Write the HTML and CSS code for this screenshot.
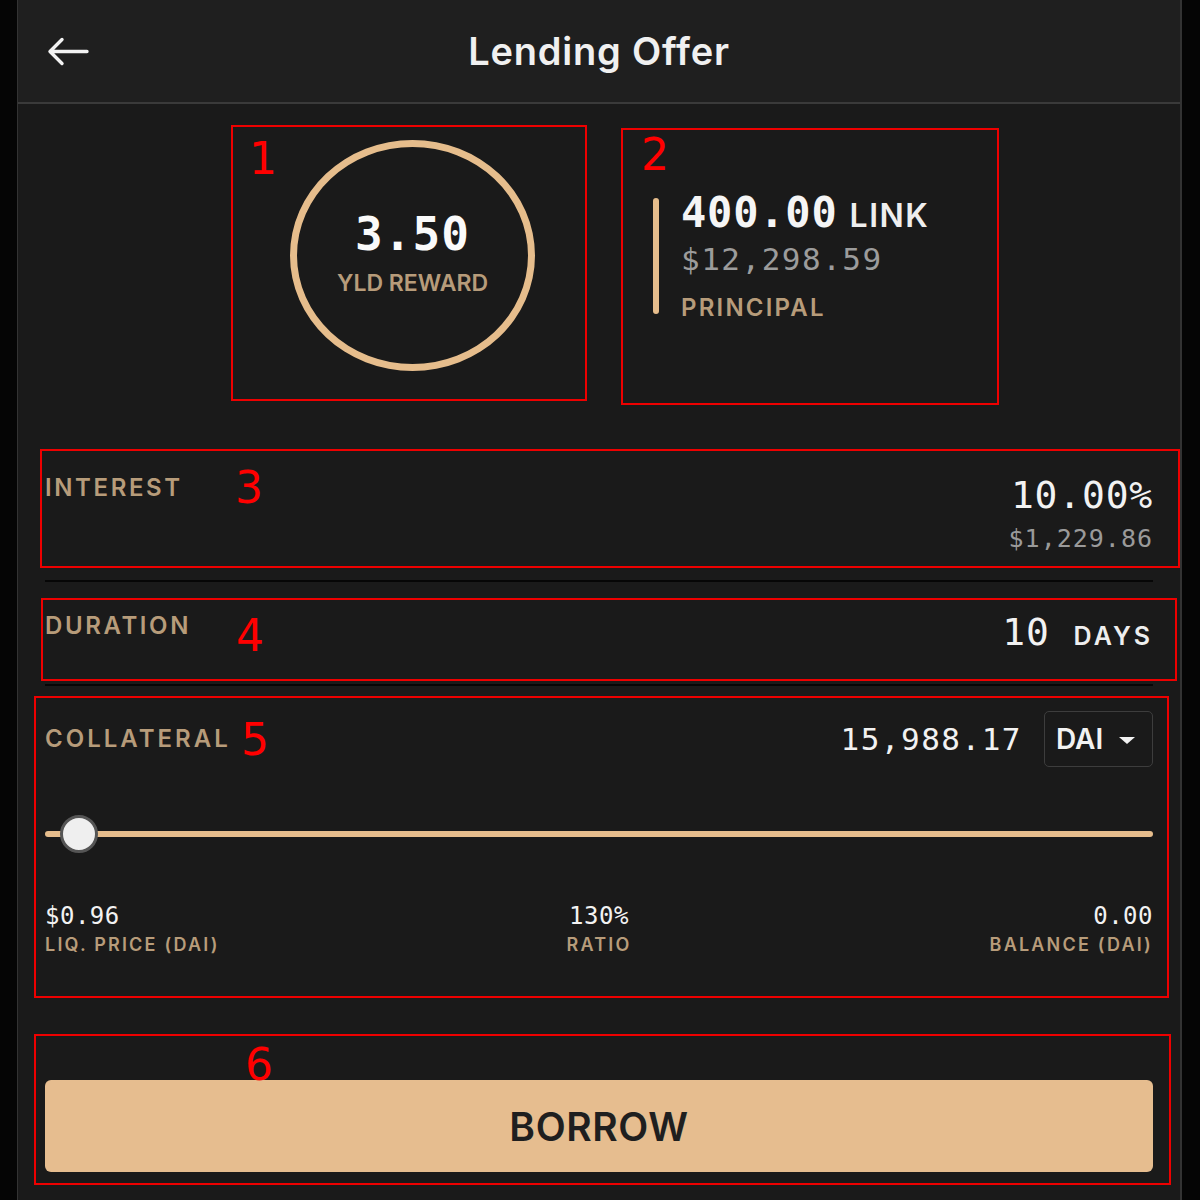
FILE: index.html
```html
<!DOCTYPE html>
<html>
<head>
<meta charset="utf-8">
<link rel="stylesheet" href="styles.css">
</head>
<body>
<div class="app">
  <header class="header">
    <div class="back">
      <svg width="44" height="30" viewBox="0 0 44 30"><path d="M41 14.5 H4 M16 2.5 L4 14.5 L16 26.5" fill="none" stroke="#f2f2f2" stroke-width="3.4" stroke-linecap="round" stroke-linejoin="round"/></svg>
    </div>
    <h1 class="title">Lending Offer</h1>
    <div></div>
  </header>
  <main class="content">
    <section class="top">
      <div class="ring">
        <div class="ring-value">3.50</div>
        <div class="ring-label">YLD REWARD</div>
      </div>
      <div class="principal">
        <div class="bar"></div>
        <div class="principal-text">
          <div class="p-amount"><span class="mono">400.00</span><span class="unit">LINK</span></div>
          <div class="p-usd">$12,298.59</div>
          <div class="label p-label">PRINCIPAL</div>
        </div>
      </div>
    </section>

    <section class="row interest">
      <div class="label">INTEREST</div>
      <div class="values">
        <div class="big">10.00%</div>
        <div class="sub">$1,229.86</div>
      </div>
    </section>
    <div class="divider"></div>

    <section class="row duration">
      <div class="label">DURATION</div>
      <div class="values inline">
        <span class="big">10</span><span class="unit days">DAYS</span>
      </div>
    </section>
    <div class="divider"></div>

    <section class="collateral">
      <div class="row coll-head">
        <div class="label">COLLATERAL</div>
        <div class="coll-right">
          <span class="coll-amount">15,988.17</span>
          <div class="select">DAI<span class="caret"></span></div>
        </div>
      </div>
      <div class="slider">
        <div class="track"></div>
        <div class="thumb"></div>
      </div>
      <div class="stats">
        <div class="stat left"><div class="s-val">$0.96</div><div class="s-lab">LIQ. PRICE (DAI)</div></div>
        <div class="stat center"><div class="s-val">130%</div><div class="s-lab">RATIO</div></div>
        <div class="stat right"><div class="s-val">0.00</div><div class="s-lab">BALANCE (DAI)</div></div>
      </div>
    </section>

    <button class="borrow">BORROW</button>
  </main>
</div>

<div class="annot">
  <div class="box b1"><span class="num">1</span></div>
  <div class="box b2"><span class="num">2</span></div>
  <div class="box b3"><span class="num">3</span></div>
  <div class="box b4"><span class="num">4</span></div>
  <div class="box b5"><span class="num">5</span></div>
  <div class="box b6"><span class="num">6</span></div>
</div>
</body>
</html>
```
FILE: styles.css
```css
* { box-sizing: border-box; }
html, body { margin: 0; padding: 0; }
body {
  background: #050505;
  font-family: "Inter", "Noto Sans", sans-serif;
  color: #f2f2f2;
  position: relative;
  width: 1200px;
  height: 1200px;
  overflow: hidden;
}
.app {
  margin-left: 17px;
  width: 1165px;
  height: 1200px;
  background: #1a1a1a;
  border-left: 1px solid #333;
  border-right: 2px solid #333;
}
.header {
  height: 104px;
  background: #1f1f1f;
  border-bottom: 2px solid #3a3a3a;
  display: grid;
  grid-template-columns: 1fr auto 1fr;
  align-items: center;
}
.back { padding-left: 28px; display: flex; align-items: center; padding-top: 1px; }
.title {
  margin: 0;
  font-size: 38px;
  font-weight: 600;
  color: #f0f0f0;
  letter-spacing: 0.8px;
}
.content { padding: 0 27px; }
.mono, .ring-value, .p-usd, .big, .sub, .coll-amount, .s-val {
  font-family: "DejaVu Sans Mono", "Liberation Mono", monospace;
}
.label {
  color: #b79c7a;
  font-size: 24px;
  font-weight: 600;
  letter-spacing: 2.6px;
  line-height: 30px;
}

/* top */
.top {
  display: flex;
  align-items: center;
  padding-left: 245px;
  gap: 118px;
  margin-top: 36px;
}
.ring {
  width: 245px;
  height: 231px;
  border: 7px solid #e6bd8c;
  border-radius: 50%;
  display: flex;
  flex-direction: column;
  align-items: center;
  justify-content: center;
}
.ring-value {
  font-size: 46px;
  font-weight: 700;
  line-height: 52px;
  letter-spacing: 1px;
  margin-top: -6px;
  color: #fafafa;
}
.ring-label {
  color: #b79c7a;
  font-size: 23px;
  font-weight: 600;
  line-height: 28px;
  margin-top: 9px;
}
.principal { display: flex; align-items: center; gap: 22px; }
.bar { width: 6px; height: 116px; background: #e6bd8c; border-radius: 3px; }
.principal-text { display: flex; flex-direction: column; margin-top: 6px; }
.p-amount { display: flex; align-items: baseline; line-height: 46px; margin-top: -2px; }
.p-amount .mono { font-size: 42px; font-weight: 700; letter-spacing: 0.8px; color: #f5f5f5; }
.unit { font-size: 32px; font-weight: 600; letter-spacing: 1.5px; margin-left: 12px; color: #eee; }
.p-usd { font-size: 31px; color: #9c9c9c; letter-spacing: 1.5px; line-height: 40px; }
.p-label { font-size: 24px; line-height: 34px; margin-top: 12px; letter-spacing: 2.2px; }

/* rows */
.row { display: flex; justify-content: space-between; align-items: flex-start; }
.interest { margin-top: 99px; }
.interest .label { padding-top: 3px; }
.values { display: flex; flex-direction: column; align-items: flex-end; }
.values.inline { flex-direction: row; align-items: baseline; }
.interest .values { padding-top: 3px; }
.big { font-size: 38px; line-height: 44px; color: #f2f2f2; letter-spacing: 0.8px; }
.sub { font-size: 25px; line-height: 30px; color: #9a9a9a; letter-spacing: 1px; margin-top: 7px; }
.days { font-size: 25px; margin-left: 24px; letter-spacing: 3px; }
.divider { height: 2px; background: #060606; margin-top: 26px; }
.duration { margin-top: 28px; }
.duration .label { padding-top: 1px; }
.duration + .divider { margin-top: 30px; }

/* collateral */
.collateral { margin-top: 25px; }
.coll-head { align-items: center; }
.coll-head .label { font-size: 24px; letter-spacing: 3px; }
.coll-right { display: flex; align-items: center; gap: 22px; }
.coll-amount { font-size: 31px; letter-spacing: 1.5px; color: #f2f2f2; }
.select {
  height: 56px;
  width: 109px;
  border: 1px solid #3d3d3d;
  border-radius: 5px;
  display: flex;
  align-items: center;
  padding-left: 11px;
  font-size: 28px;
  font-weight: 600;
  color: #f2f2f2;
}
.caret {
  width: 0; height: 0;
  border-left: 8px solid transparent;
  border-right: 8px solid transparent;
  border-top: 7px solid #f2f2f2;
  margin-left: 16px;
  margin-top: 3px;
}
.slider { position: relative; height: 40px; margin-top: 47px; display: flex; align-items: center; }
.track { width: 100%; height: 6px; background: #e6bd8c; border-radius: 3px; }
.thumb {
  position: absolute;
  left: 15px;
  top: 1px;
  width: 38px;
  height: 38px;
  border-radius: 50%;
  background: #efefef;
  border: 3px solid #555;
}
.stats { display: grid; grid-template-columns: 1fr 1fr 1fr; margin-top: 48px; }
.stat.left { text-align: left; }
.stat.center { text-align: center; }
.stat.right { text-align: right; }
.s-val { font-size: 24px; line-height: 28px; color: #f2f2f2; letter-spacing: 0.5px; }
.s-lab { font-size: 18px; line-height: 26px; font-weight: 600; color: #b79c7a; letter-spacing: 2.2px; margin-top: 2px; }

.borrow {
  display: block;
  width: 100%;
  height: 92px;
  margin-top: 122px;
  border: none;
  border-radius: 6px;
  background: #e6bd8f;
  color: #1f1f1f;
  font-family: "Inter", "Noto Sans", sans-serif;
  font-size: 39px;
  font-weight: 600;
  letter-spacing: 0.6px;
}

/* annotation overlay */
.annot { position: absolute; left: 0; top: 0; width: 1200px; height: 1200px; pointer-events: none; }
.box { position: absolute; border: 2px solid #ee0000; }
.num {
  position: absolute;
  color: #ff0000;
  font-family: "DejaVu Sans", sans-serif;
  font-size: 44px;
  line-height: 44px;
}
.b1 { left: 231px; top: 125px; width: 356px; height: 276px; }
.b1 .num { left: 16px; top: 10px; }
.b2 { left: 621px; top: 128px; width: 378px; height: 277px; }
.b2 .num { left: 18px; top: 3px; }
.b3 { left: 40px; top: 449px; width: 1140px; height: 119px; }
.b3 .num { left: 193px; top: 15px; }
.b4 { left: 41px; top: 598px; width: 1136px; height: 83px; }
.b4 .num { left: 193px; top: 14px; }
.b5 { left: 34px; top: 696px; width: 1135px; height: 302px; }
.b5 .num { left: 205px; top: 20px; }
.b6 { left: 34px; top: 1034px; width: 1137px; height: 151px; }
.b6 .num { left: 209px; top: 7px; }
```
